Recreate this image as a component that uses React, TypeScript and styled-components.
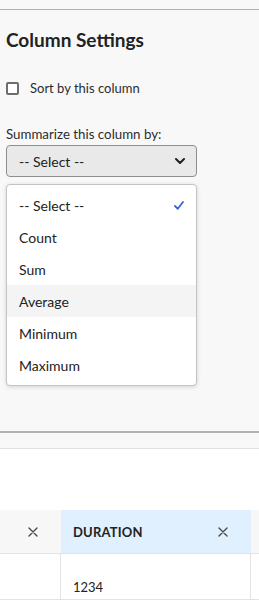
import styled, { createGlobalStyle } from "styled-components";

const GlobalStyle = createGlobalStyle`
    html, body {
        margin: 0;
        padding: 0;
        background: #ffffff;
        font-family: Lato, "Open Sans", sans-serif;
        color: #222222;
    }
    * {
        box-sizing: border-box;
    }
`;

const Page = styled.div`
    width: 259px;
    height: 609px;
    overflow: hidden;
    background: #ffffff;
`;

const TopGap = styled.div`
    height: 10px;
    background: #f8f8f8;
    border-bottom: 1px solid #b3b3b3;
`;

const Panel = styled.section`
    background: #f8f8f8;
    height: 423px;
    padding: 0 6px;
    border-bottom: 2px solid #b1b1b1;
`;

const Title = styled.h2`
    margin: 0;
    padding-top: 18px;
    font-size: 19px;
    font-weight: 700;
    line-height: 24px;
    color: #222222;
`;

const CheckRow = styled.label`
    display: flex;
    align-items: center;
    gap: 11px;
    margin-top: 28px;
    font-size: 13px;
    color: #2c2c2c;
`;

const Box = styled.span`
    width: 13px;
    height: 13px;
    border: 2px solid #6d6d6d;
    border-radius: 2px;
    background: #ffffff;
`;

const FieldLabel = styled.div`
    margin-top: 29px;
    font-size: 13.3px;
    line-height: 18px;
    color: #2c2c2c;
`;

const SelectButton = styled.div`
    margin-top: 2px;
    width: 191px;
    height: 32px;
    display: flex;
    align-items: center;
    justify-content: space-between;
    padding: 0 11px 0 12px;
    background: #e9e9e9;
    border: 1px solid #8e8e8e;
    border-radius: 4px;
    font-size: 14px;
    color: #222222;
`;

const Menu = styled.ul`
    margin: 7px 0 0;
    list-style: none;
    width: 191px;
    padding: 4px 0;
    background: #ffffff;
    border: 1px solid #c4c4c4;
    border-radius: 4px;
    box-shadow: 0 1px 4px rgba(0, 0, 0, 0.15);
`;

const MenuItem = styled.li<{ $hover?: boolean }>`
    height: 32px;
    display: flex;
    align-items: center;
    justify-content: space-between;
    padding: 0 12px 0 12px;
    font-size: 14px;
    color: #222222;
    background: ${(props) => (props.$hover ? "#f4f4f4" : "#ffffff")};
`;

const Strip = styled.div`
    height: 16px;
    background: #f8f8f8;
    border-bottom: 1px solid #e1e1e1;
`;

const TableArea = styled.div`
    padding-top: 61px;
`;

const Grid = styled.div`
    display: grid;
    grid-template-columns: 61px 190px 1fr;
`;

const HeadCell = styled.div<{ $active?: boolean; $iconOnly?: boolean }>`
    height: 44px;
    display: flex;
    align-items: center;
    justify-content: ${(props) => (props.$iconOnly ? "flex-end" : "space-between")};
    padding: 0 23px 0 12px;
    background: ${(props) => (props.$active ? "#e0f0fe" : "#f7f7f7")};
    border-bottom: 1px solid #e3e3e3;
    font-size: 13px;
    font-weight: 700;
    color: #222222;
    letter-spacing: 0.2px;
`;

const BodyCell = styled.div`
    height: 46px;
    display: flex;
    align-items: flex-end;
    padding: 0 12px 4px;
    border-bottom: 1px solid #e3e3e3;
    border-right: 1px solid #e3e3e3;
    font-size: 13px;
    color: #222222;
`;

const CloseIcon = () => (
    <svg width="10" height="10" viewBox="0 0 10 10">
        <path d="M1 1 L9 9 M9 1 L1 9" stroke="#4b4b4b" strokeWidth="1.4" strokeLinecap="round" />
    </svg>
);

const Chevron = () => (
    <svg width="10" height="6" viewBox="0 0 10 6">
        <path d="M1 1 L5 5 L9 1" stroke="#222222" strokeWidth="2" fill="none" strokeLinecap="round" strokeLinejoin="round" />
    </svg>
);

const Check = () => (
    <svg width="10" height="9" viewBox="0 0 10 9">
        <path d="M1 5 L3.8 7.8 L9 1" stroke="#3b63d6" strokeWidth="1.8" fill="none" strokeLinecap="round" strokeLinejoin="round" />
    </svg>
);

const options = ["-- Select --", "Count", "Sum", "Average", "Minimum", "Maximum"];

function App() {
    return (
        <Page>
            <GlobalStyle />
            <TopGap />
            <Panel>
                <Title>Column Settings</Title>
                <CheckRow>
                    <Box />
                    Sort by this column
                </CheckRow>
                <FieldLabel>Summarize this column by:</FieldLabel>
                <SelectButton>
                    -- Select --
                    <Chevron />
                </SelectButton>
                <Menu>
                    {options.map((opt, i) => (
                        <MenuItem key={opt} $hover={opt === "Average"}>
                            {opt}
                            {i === 0 && <Check />}
                        </MenuItem>
                    ))}
                </Menu>
            </Panel>
            <Strip />
            <TableArea>
                <Grid>
                    <HeadCell $iconOnly>
                        <CloseIcon />
                    </HeadCell>
                    <HeadCell $active>
                        DURATION
                        <CloseIcon />
                    </HeadCell>
                    <HeadCell />
                    <BodyCell />
                    <BodyCell>1234</BodyCell>
                    <BodyCell />
                </Grid>
            </TableArea>
        </Page>
    );
}

export default App;
